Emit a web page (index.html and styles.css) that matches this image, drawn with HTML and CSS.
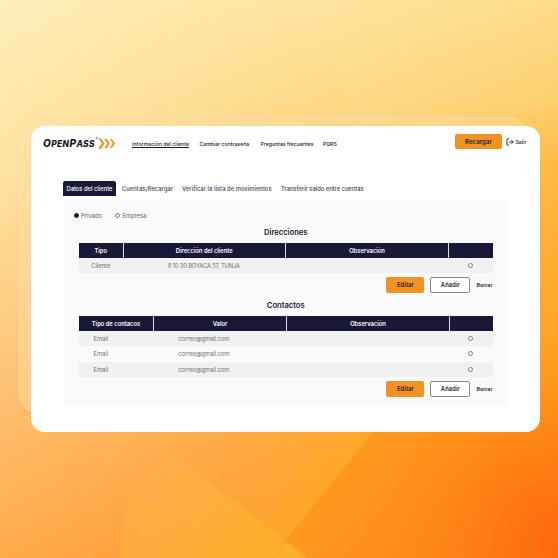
FILE: index.html
```
<!DOCTYPE html>
<html lang="es">
<head>
<meta charset="utf-8">
<title>OpenPass</title>
<link rel="stylesheet" href="styles.css">
</head>
<body>
<svg class="backdrop" viewBox="0 0 558 558" aria-hidden="true">
  <defs>
    <linearGradient id="base" x1="0" y1="0" x2="0" y2="1">
      <stop offset="0" stop-color="#ffeebb"/><stop offset=".3" stop-color="#fee4a2"/><stop offset=".65" stop-color="#fdc67c"/><stop offset=".82" stop-color="#ffb863"/><stop offset="1" stop-color="#ffab4b"/>
    </linearGradient>
    <linearGradient id="right" x1="0" y1="0" x2="0" y2="1">
      <stop offset="0" stop-color="#fedc8b"/><stop offset=".18" stop-color="#fdcf6d"/><stop offset=".3" stop-color="#ffb943"/><stop offset=".6" stop-color="#ffa326"/><stop offset=".78" stop-color="#ff9318"/><stop offset="1" stop-color="#ff8012"/>
    </linearGradient>
    <linearGradient id="fade"><stop offset="0" stop-color="#fff" stop-opacity="0"/><stop offset="1" stop-color="#fff"/></linearGradient>
    <mask id="side"><rect width="558" height="558" fill="url(#fade)"/></mask>
    <radialGradient id="corner" gradientUnits="userSpaceOnUse" cx="565" cy="545" r="210">
      <stop offset="0" stop-color="#ff640c"/><stop offset=".4" stop-color="#ff7410" stop-opacity=".6"/><stop offset="1" stop-color="#ff8a14" stop-opacity="0"/>
    </radialGradient>
    <linearGradient id="facet" gradientUnits="userSpaceOnUse" x1="330" y1="485" x2="240" y2="420">
      <stop offset="0" stop-color="#ffaa24" stop-opacity=".8"/><stop offset="1" stop-color="#ffb045" stop-opacity="0"/>
    </linearGradient>
    <linearGradient id="fold" gradientUnits="userSpaceOnUse" x1="325" y1="485" x2="430" y2="560">
      <stop offset="0" stop-color="#ff981a" stop-opacity=".85"/><stop offset="1" stop-color="#ff8a18" stop-opacity=".35"/>
    </linearGradient>
    <linearGradient id="wedge" gradientUnits="userSpaceOnUse" x1="170" y1="450" x2="260" y2="530">
      <stop offset="0" stop-color="#ffb84b" stop-opacity=".25"/><stop offset="1" stop-color="#ffb02e" stop-opacity=".95"/>
    </linearGradient>
    <linearGradient id="veil" x1="0" y1="0" x2="1" y2="0"><stop offset="0" stop-color="#ffe49a" stop-opacity=".2"/><stop offset="1" stop-color="#ffe49a" stop-opacity="0"/></linearGradient>
    <filter id="soft"><feGaussianBlur stdDeviation="1"/></filter>
  </defs>
  <rect width="558" height="558" fill="url(#base)"/>
  <rect width="558" height="558" fill="url(#right)" mask="url(#side)"/>
  <path d="M260 0L310 50Q346 75 358 126H558V0z" fill="url(#veil)"/>
  <g filter="url(#soft)">
    <path d="M375 430L286 541L170 452L190 425z" fill="url(#facet)"/>
    <path d="M375 430H568V568H314L286 541z" fill="url(#fold)"/>
    <path d="M170 452L286 541L320 568H124Q118 520 128 500z" fill="url(#wedge)"/>
    <path d="M376 430L270 562" fill="none" stroke="#e98d18" stroke-opacity=".35" stroke-width="1.5"/>
  </g>
  <rect width="558" height="558" fill="url(#corner)"/>
</svg>
<div class="shade"></div>
<main class="card">
  <header class="top">
    <div class="logo">
      <span class="word"><b>O</b>PEN<b>P</b>ASS</span><sup>®</sup>
      <svg class="chevrons" viewBox="0 0 18 11"><path d="M.3.3H3L6.6 5.5 3 10.7H.3L3.9 5.5zM6.2.8h2.5L12 5.5 8.7 10.2H6.2L9.5 5.5zM11.7 1.2H14l3 4.3-3 4.3h-2.3l3-4.3z"/></svg>
    </div>
    <nav class="nav">
      <a class="current">Información del cliente</a><a class="n2">Cambiar contraseña</a><a class="n3">Preguntas frecuentes</a><a class="n4">PQRS</a>
    </nav>
    <button class="btn recharge">Recargar</button>
    <a class="exit"><svg viewBox="0 0 8 8"><path d="M3 .8H1.7Q.9.8.9 1.6v4.8q0 .8.8.8H3M2.8 4h4.4M5.5 2.2L7.3 4 5.5 5.8"/></svg><span>Salir</span></a>
  </header>
  <nav class="tabs">
    <a class="active">Datos del cliente</a><a class="t2">Cuentas/Recargar</a><a class="t3">Verificar la lista de movimientos</a><a class="t4">Transferir saldo entre cuentas</a>
  </nav>
  <section class="panel">
    <div class="kind">
      <label><i class="dot on"></i>Privado</label><label><i class="dot"></i>Empresa</label>
    </div>
    <h2>Direcciones</h2>
    <div class="table">
      <div class="head addresses"><span>Tipo</span><span>Dirección del cliente</span><span>Observación</span><span></span></div>
      <div class="row odd"><span>Cliente</span><span class="street">8 10 30 BOYACA 57, TUNJA</span><span></span><span><i class="dot"></i></span></div>
    </div>
    <div class="actions"><button class="btn">Editar</button><button class="btn outline">Añadir</button><a>Borrar</a></div>
    <h2 class="second">Contactos</h2>
    <div class="table">
      <div class="head contacts"><span>Tipo de contacos</span><span>Valor</span><span>Observación</span><span></span></div>
      <div class="row odd"><span>Email</span><span class="mail">correo@gmail.com</span><span></span><span><i class="dot"></i></span></div>
      <div class="row"><span>Email</span><span class="mail">correo@gmail.com</span><span></span><span><i class="dot"></i></span></div>
      <div class="row odd"><span>Email</span><span class="mail">correo@gmail.com</span><span></span><span><i class="dot"></i></span></div>
    </div>
    <div class="actions"><button class="btn">Editar</button><button class="btn outline">Añadir</button><a>Borrar</a></div>
  </section>
</main>
</body>
</html>
```
FILE: styles.css
```
* { box-sizing: border-box; }
body { margin: 0; width: 558px; height: 558px; overflow: hidden; position: relative; padding: 126px 0 0 31px; font-family: Inter, "Open Sans", sans-serif; color: #1b1b36; }
.backdrop { position: absolute; inset: 0; width: 558px; height: 558px; }
.shade { position: absolute; left: 18px; top: 115px; width: 509px; height: 300px; border-radius: 22px; background: rgba(255, 222, 166, .42); box-shadow: 0 1px 2px rgba(190, 120, 30, .14); }
.card { position: relative; width: 509px; height: 306px; border-radius: 14px; background: #fff; }
.top { display: flex; height: 55px; padding-left: 12px; align-items: flex-start; white-space: nowrap; }
.logo { display: flex; width: 89px; padding-top: 11px; height: 24px; align-items: center; color: #15152f; }
.word { font-size: 8.4px; font-weight: 800; font-style: italic; letter-spacing: .42px; line-height: 12px; width: 52.5px; }
.word b { font-size: 10px; font-weight: 800; }
.logo sup { font-size: 3px; width: 2px; align-self: flex-start; line-height: 4px; }
.chevrons { width: 18px; height: 11px; fill: #f29322; }
.nav { display: flex; padding-top: 14px; width: 323px; font-size: 5.2px; font-weight: 500; line-height: 8px; }
.nav a { width: 61px; letter-spacing: -.02px; }
.nav .current { width: 67.5px; letter-spacing: .02px; text-decoration: underline; text-decoration-thickness: .5px; text-underline-offset: 1px; }
.nav .n3 { width: 62.5px; }
.nav .n4 { letter-spacing: -.1px; }
.btn { display: flex; align-items: center; justify-content: center; width: 38px; height: 16px; margin: 0; padding: 0; border: 0; border-radius: 2px; background: #f29222; color: #25203a; font: 600 5.8px Inter, sans-serif; letter-spacing: .1px; }
.recharge { width: 47px; height: 15px; margin-top: 8px; font-size: 6px; }
.exit { display: flex; align-items: center; height: 15px; margin: 8px 0 0 3.5px; font-size: 5.2px; font-weight: 500; gap: 2px; }
.exit svg { width: 8px; height: 8px; fill: none; stroke: #1b1b36; stroke-width: .9; }
.tabs { display: flex; height: 15px; margin-left: 32px; font-size: 5.8px; font-weight: 500; line-height: 15px; white-space: nowrap; color: #44444f; }
.tabs .active { width: 53px; text-align: center; background: #191937; color: #fff; border-radius: 2px 2px 0 0; }
.tabs .t2 { margin-left: 6px; width: 60px; letter-spacing: .06px; }
.tabs .t3 { width: 99px; letter-spacing: .04px; }
.tabs .t4 { letter-spacing: -.02px; }
.panel { width: 444px; height: 205px; margin: 5px 0 0 33px; padding: 10px 15.5px 0 15px; border-radius: 3px; background: #fafafa; }
.kind { display: flex; height: 9px; margin: 0 0 0 -5.5px; gap: 13px; align-items: center; font-size: 5.8px; color: #62626b; }
.kind label { display: flex; align-items: center; gap: 2.5px; }
.dot { display: block; width: 5px; height: 5px; border: .5px solid #777780; border-radius: 50%; background: #fff; flex: none; }
.dot.on { background: #191937; border-color: #191937; }
h2 { height: 10px; margin: 8px 0 5px; font-size: 7.6px; font-weight: 600; line-height: 10px; text-align: center; }
.head, .row { display: grid; grid-template-columns: 43.5px 162.5px 163px 1fr; height: 15px; font-size: 5.8px; line-height: 15px; text-align: center; white-space: nowrap; }
.head { background: #191937; color: #fff; font-weight: 600; }
.head span + span { border-left: 1px solid #d8d8df; }
.contacts { grid-template-columns: 74px 133px 163px 1fr; }
.row { height: 15.3px; color: #6f6f76; }
.odd { background: #f1f1f1; }
.street { letter-spacing: -.15px; }
.mail { letter-spacing: -.06px; }
.row span:last-child { display: grid; place-items: center; }
.actions { display: flex; justify-content: flex-end; align-items: center; height: 16px; margin-top: 3.7px; font-size: 5.3px; font-weight: 600; }
.outline { width: 40px; margin: 0 6px; background: #fff; border: 1px solid #85858f; }
```
